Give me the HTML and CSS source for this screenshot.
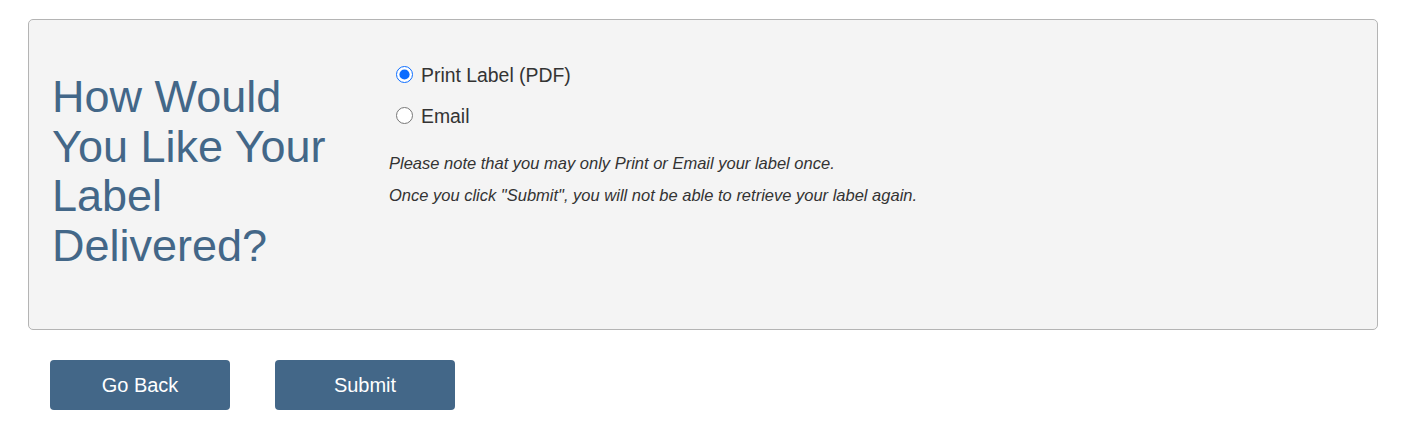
FILE: index.html
```html
<!DOCTYPE html>
<html lang="en">
<head>
<meta charset="utf-8">
<title>Label Delivery</title>
<link rel="stylesheet" href="styles.css">
</head>
<body>
<div class="page">
  <section class="panel">
    <h2 class="panel-title">How Would You Like Your Label Delivered?</h2>
    <div class="panel-body">
      <label class="option"><input type="radio" name="delivery" checked><span>Print Label (PDF)</span></label>
      <label class="option"><input type="radio" name="delivery"><span>Email</span></label>
      <p class="note note-first">Please note that you may only Print or Email your label once.</p>
      <p class="note">Once you click "Submit", you will not be able to retrieve your label again.</p>
    </div>
  </section>
  <div class="actions">
    <button class="btn" type="button">Go Back</button>
    <button class="btn" type="button">Submit</button>
  </div>
</div>
</body>
</html>
```

FILE: styles.css
```css
html, body {
  margin: 0;
  padding: 0;
  background: #ffffff;
}

body {
  font-family: "Liberation Sans", Arial, sans-serif;
  color: #333333;
}

.page {
  padding: 19px 27px 0 28px;
}

.panel {
  display: grid;
  grid-template-columns: 337px 1fr;
  height: 311px;
  box-sizing: border-box;
  background: #f4f4f4;
  border: 1px solid #b4b4b4;
  border-radius: 5px;
  padding: 0 0 0 23px;
}

.panel-title {
  margin: 52px 0 0 0;
  font-size: 45px;
  font-weight: normal;
  line-height: 49.5px;
  color: #436788;
  width: 290px;
}

.panel-body {
  padding-top: 44px;
  display: flex;
  flex-direction: column;
  align-items: flex-start;
}

.option {
  display: flex;
  align-items: center;
  font-size: 19.4px;
  color: #333333;
  height: 22px;
  margin-bottom: 19px;
  margin-left: 7px;
}

.option input {
  width: 17px;
  height: 17px;
  margin: 0 8px 2px 0;
  accent-color: #0a6cff;
}

.note {
  margin: 0;
  font-size: 16.5px;
  font-style: italic;
  color: #333333;
  line-height: 32px;
}

.note-first {
  margin-top: 1px;
}

.actions {
  display: flex;
  gap: 45px;
  padding: 30px 0 0 22px;
}

.btn {
  width: 180px;
  height: 50px;
  border: none;
  border-radius: 4px;
  background: #436788;
  color: #ffffff;
  font-family: "Liberation Sans", Arial, sans-serif;
  font-size: 20px;
  cursor: pointer;
}
```
